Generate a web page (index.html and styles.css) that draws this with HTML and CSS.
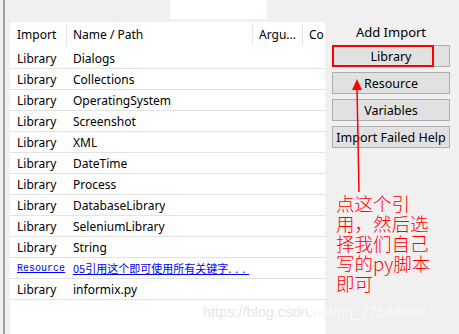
FILE: index.html
```html
<!DOCTYPE html>
<html lang="en">
<head>
    <meta charset="UTF-8">
    <meta name="viewport" content="width=device-width, initial-scale=1.0">
    <title>Imports</title>
    <link rel="stylesheet" href="styles.css">
</head>
<body>
    <div class="window">
        <div class="frame"></div>
        <div class="imports">
            <div class="toolbar"><div class="filter"></div></div>
            <div class="head">
                <div class="cell c-type">Import</div>
                <div class="cell c-name">Name / Path</div>
                <div class="cell c-args">Argu...</div>
                <div class="cell c-comment">Co</div>
            </div>
            <div class="row"><div class="cell c-type">Library</div><div class="cell">Dialogs</div></div>
            <div class="row"><div class="cell c-type">Library</div><div class="cell">Collections</div></div>
            <div class="row"><div class="cell c-type">Library</div><div class="cell">OperatingSystem</div></div>
            <div class="row"><div class="cell c-type">Library</div><div class="cell">Screenshot</div></div>
            <div class="row"><div class="cell c-type">Library</div><div class="cell">XML</div></div>
            <div class="row"><div class="cell c-type">Library</div><div class="cell">DateTime</div></div>
            <div class="row"><div class="cell c-type">Library</div><div class="cell">Process</div></div>
            <div class="row"><div class="cell c-type">Library</div><div class="cell">DatabaseLibrary</div></div>
            <div class="row"><div class="cell c-type">Library</div><div class="cell">SeleniumLibrary</div></div>
            <div class="row"><div class="cell c-type">Library</div><div class="cell">String</div></div>
            <div class="row link-row">
                <div class="cell c-type"><a class="mono">Resource</a></div>
                <div class="cell"><a class="cjk">05引用这个即可使用所有关键字<span class="dots">...</span></a></div>
            </div>
            <div class="row"><div class="cell c-type">Library</div><div class="cell">informix.py</div></div>
        </div>
        <div class="panel">
            <div class="panel-title">Add Import</div>
            <button class="btn btn-marked">Library<span class="mark"></span></button>
            <button class="btn">Resource</button>
            <button class="btn">Variables</button>
            <button class="btn">Import Failed Help</button>
        </div>

        <!-- annotation drawn over the screenshot -->
        <svg class="arrow" width="20" height="113" viewBox="0 0 20 113">
            <polygon points="7,0 2,11 12,11" fill="#ff0000"/>
            <path d="M7 10 L8 60 L9 113" stroke="#ff0000" stroke-width="1.5" fill="none"/>
        </svg>
        <div class="note">
            <div class="note-line">点这个引</div>
            <div class="note-line">用，然后选</div>
            <div class="note-line">择我们自己</div>
            <div class="note-line">写的py脚本</div>
            <div class="note-line">即可</div>
        </div>
        <div class="watermark"><span class="wm-light">https://blog.csdn.</span><span class="wm-pale">net/qq_27534003</span></div>
    </div>
</body>
</html>
```

FILE: styles.css
```css
body {
    margin: 0;
    background-color: #f0f0f0;
    font-family: 'Noto Sans', 'Open Sans', sans-serif;
    font-size: 12px;
    color: #000000;
}
.window {
    position: relative;
    display: flex;
    width: 459px;
    height: 334px;
    overflow: hidden;
}
.frame {
    width: 5px;
    margin-left: 3px;
    border-left: 2px solid #a0a0a0;
    flex-shrink: 0;
}
.imports {
    width: 315px;
    flex-shrink: 0;
    background-color: #ffffff;
    overflow: hidden;
}
.toolbar {
    height: 22px;
    background-color: #f0f0f0;
}
.filter {
    width: 97px;
    height: 19px;
    margin-left: 160px;
    background-color: #ffffff;
}
.head {
    display: flex;
    height: 26px;
    padding-top: 1px;
    box-sizing: border-box;
}
.head .cell {
    height: 23px;
}
.cell {
    display: flex;
    align-items: center;
    padding-left: 7px;
    box-sizing: border-box;
    white-space: nowrap;
    overflow: hidden;
}
.c-type {
    width: 56px;
    flex-shrink: 0;
}
.c-name {
    width: 186px;
    padding-left: 6px;
    border-left: 1px solid #e5e5e5;
}
.c-args {
    width: 50px;
    padding-left: 6px;
    border-left: 1px solid #e5e5e5;
}
.c-comment {
    width: 23px;
    padding-left: 6px;
    border-left: 1px solid #e5e5e5;
}
.row {
    display: flex;
    height: 21px;
    border-bottom: 1px solid #e3e3e3;
    box-sizing: border-box;
}
.row .cell + .cell {
    padding-left: 7px;
}
.link-row a {
    color: #0000ff;
    text-decoration: underline;
}
.mono {
    font-family: 'Liberation Mono', monospace;
    font-size: 10px;
}
.cjk {
    font-family: 'Noto Sans CJK SC', sans-serif;
    font-size: 11px;
}
.dots {
    letter-spacing: 4px;
}
.panel {
    flex: 1;
    display: flex;
    flex-direction: column;
    align-items: flex-start;
    padding-left: 7px;
}
.panel-title {
    width: 118px;
    text-align: center;
    font-size: 13px;
    margin-top: 23px;
    margin-bottom: 3px;
    line-height: 19px;
}
.btn {
    position: relative;
    width: 118px;
    height: 22px;
    margin-bottom: 5px;
    padding: 0;
    background-color: #e1e1e1;
    border: 1px solid #adadad;
    font-family: 'Noto Sans', 'Open Sans', sans-serif;
    font-size: 12.5px;
    color: #000000;
}
.mark {
    position: absolute;
    left: -1px;
    top: -1px;
    width: 102px;
    height: 22px;
    border: 2px solid #ff0000;
    box-sizing: border-box;
}
.arrow {
    position: absolute;
    left: 350px;
    top: 79px;
}
.note {
    position: absolute;
    left: 336px;
    top: 193px;
    font-family: 'Noto Sans CJK SC', sans-serif;
    font-size: 18.5px;
    font-weight: 300;
    color: #ff0000;
}
.note-line {
    height: 20px;
    line-height: 20px;
    white-space: nowrap;
}
.watermark {
    position: absolute;
    left: 203px;
    top: 304px;
    font-family: 'Liberation Sans', Arial, sans-serif;
    font-size: 14.5px;
}
.wm-light {
    color: #e6e6e6;
}
.wm-pale {
    color: #f9f9f9;
}
```
